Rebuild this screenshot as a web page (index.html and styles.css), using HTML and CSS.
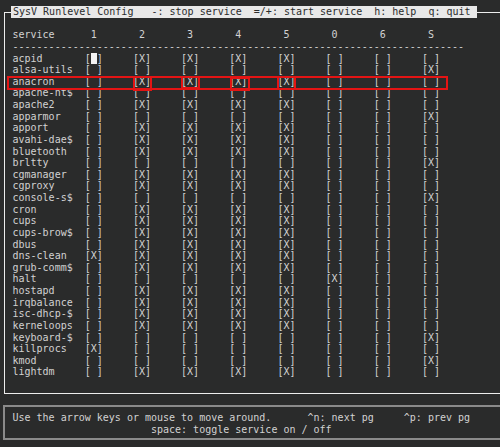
FILE: index.html
```html
<!DOCTYPE html>
<html>
  <head>
    <title>SysV Runlevel Config</title>
    <link rel="stylesheet" href="styles.css">
  </head>
  <body>
    <div class="screen">
      <div class="main-box">
        <div class="title">SysV Runlevel Config   -: stop service  =/+: start service  h: help  q: quit</div>
        <pre class="table" id="table"></pre>
      </div>
      <div class="help-box">
        <pre class="help">Use the arrow keys or mouse to move around.      ^n: next pg     ^p: prev pg
                       space: toggle service on / off</pre>
      </div>
      <!-- annotation boxes drawn over the screenshot -->
      <div class="mark mark-row"></div>
      <div class="mark mark-c2"></div>
      <div class="mark mark-c3"></div>
      <div class="mark mark-c4"></div>
      <div class="mark mark-c5"></div>
    </div>
    <script>
      // runlevels in display order: 1 2 3 4 5 0 6 S
      const levels = ["1", "2", "3", "4", "5", "0", "6", "S"];
      const services = [
        ["acpid", "01111000"],
        ["alsa-utils", "00000001"],
        ["anacron", "01111000"],
        ["apache-ht$", "00000000"],
        ["apache2", "01111000"],
        ["apparmor", "00000001"],
        ["apport", "01111000"],
        ["avahi-dae$", "01111000"],
        ["bluetooth", "01111000"],
        ["brltty", "00000001"],
        ["cgmanager", "01111000"],
        ["cgproxy", "01111000"],
        ["console-s$", "00000001"],
        ["cron", "01111000"],
        ["cups", "01111000"],
        ["cups-brow$", "01111000"],
        ["dbus", "01111000"],
        ["dns-clean", "11111000"],
        ["grub-comm$", "01111000"],
        ["halt", "00000100"],
        ["hostapd", "01111000"],
        ["irqbalance", "01111000"],
        ["isc-dhcp-$", "01111000"],
        ["kerneloops", "01111000"],
        ["keyboard-$", "00000001"],
        ["killprocs", "10000000"],
        ["kmod", "00000001"],
        ["lightdm", "01111000"]
      ];

      const table = document.getElementById("table");
      let html = "service".padEnd(13) + levels.join("       ") + "\n";
      html += "-".repeat(75) + "\n";

      services.forEach(function (svc, i) {
        const cells = svc[1].split("").map(function (on, j) {
          if (i === 0 && j === 0) {
            return '[<span class="cursor"> </span>]';
          }
          return on === "1" ? "[X]" : "[ ]";
        });
        html += svc[0].padEnd(12) + cells.join("     ") + "\n";
      });

      table.innerHTML = html;
    </script>
  </body>
</html>
```

FILE: styles.css
```css
body {
  margin: 0;
  background-color: #2a2b2b;
}

.screen {
  position: relative;
  height: 447px;
  overflow: hidden;
  font-family: "DejaVu Sans Mono", monospace;
  font-size: 10px;
  line-height: 11.63px;
  color: #d2d2d2;
}

pre {
  margin: 0;
  font-family: inherit;
  font-size: inherit;
  line-height: inherit;
}

.main-box {
  margin: 12px 0 0 4px;
  border-top: 1px solid #ededed;
  border-left: 1px solid #ededed;
  border-bottom: 1px solid #ededed;
  padding-bottom: 15px;
}

.title {
  width: fit-content;
  margin: -7px 0 0 6px;
  padding: 0 6px 0 2px;
  background-color: #e8e8e8;
  color: #2a2b2b;
  white-space: pre;
}

.table {
  margin-top: 11.63px;
  padding-left: 7.5px;
}

.cursor {
  background-color: #f2f2f2;
}

.help-box {
  margin: 11px 0 0 3px;
  border: 2px solid #8a8a8a;
  border-right: none;
  padding: 5px 0 3px 7.5px;
}

/* red annotation rectangles */
.mark {
  position: absolute;
  box-sizing: border-box;
  border: 2px solid #e41414;
}

.mark-row {
  left: 7px;
  top: 76px;
  width: 441px;
  height: 14px;
}

.mark-c2 {
  left: 133px;
  top: 76px;
  width: 19px;
  height: 15px;
}

.mark-c3 {
  left: 181px;
  top: 76px;
  width: 19px;
  height: 13px;
}

.mark-c4 {
  left: 230px;
  top: 77px;
  width: 20px;
  height: 14px;
}

.mark-c5 {
  left: 277px;
  top: 76px;
  width: 19px;
  height: 14px;
}
```
